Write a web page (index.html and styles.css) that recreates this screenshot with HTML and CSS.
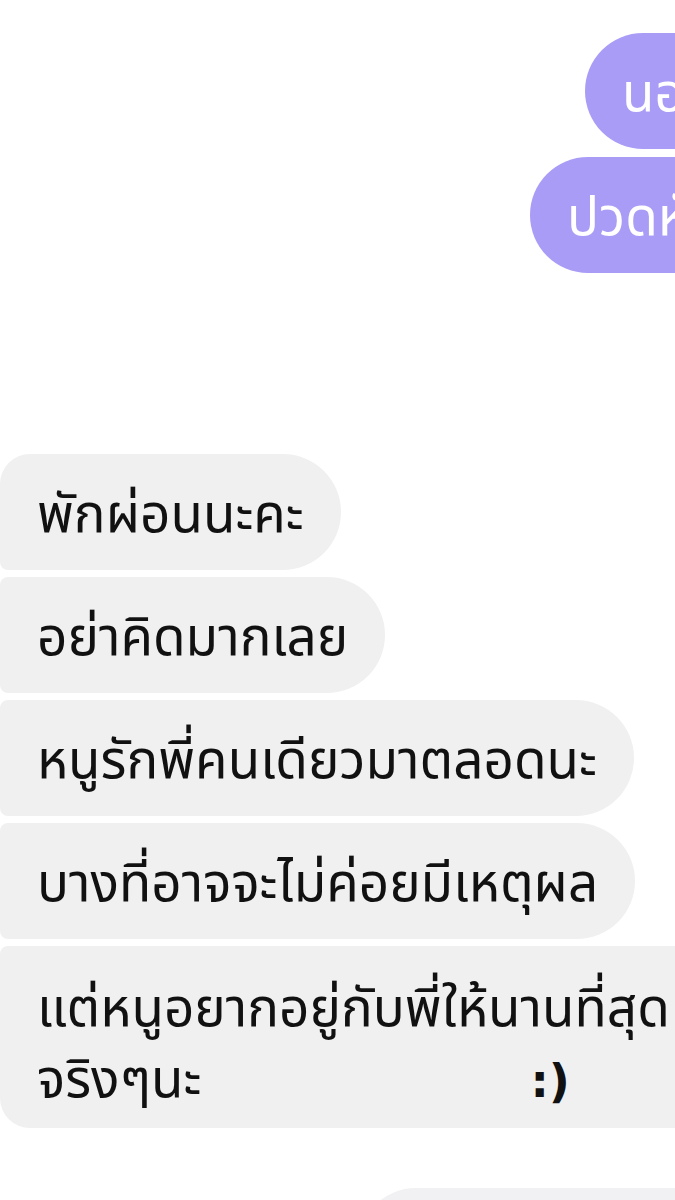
FILE: index.html
```html
<!DOCTYPE html>
<html>
<head>
	<meta charset="utf-8">
	<title>แชท</title>
	<link rel="stylesheet" href="styles.css">
</head>
<body>
	<div class="chat">
		<!-- ข้อความที่ส่ง -->
		<div class="group out">
			<div class="row row-a"><div class="bubble purple first">นอนไม่หลับ</div></div>
			<div class="row row-b"><div class="bubble purple last">ปวดหัวมาก</div></div>
		</div>

		<!-- ข้อความที่ได้รับ -->
		<div class="group in">
			<div class="bubble grey first">พักผ่อนนะคะ</div>
			<div class="bubble grey">อย่าคิดมากเลย</div>
			<div class="bubble grey">หนูรักพี่คนเดียวมาตลอดนะ</div>
			<div class="bubble grey">บางที่อาจจะไม่ค่อยมีเหตุผล</div>
			<div class="bubble grey last wide">แต่หนูอยากอยู่กับพี่ให้นานที่สุด<br>จริงๆนะ<span class="smile">:)</span></div>
		</div>

		<div class="group next">
			<div class="bubble grey first">&nbsp;</div>
		</div>
	</div>
</body>
</html>
```

FILE: styles.css
```css
*{
	margin: 0;
	padding: 0;
	box-sizing: border-box;
}
html, body{
	background: #ffffff;
	overflow: hidden;
}
body{
	width: 675px;
	height: 1200px;
	font-family: "Noto Sans Thai", "Noto Sans", "DejaVu Sans", sans-serif;
	font-size: 53px;
	color: #111111;
}
.chat{
	display: flex;
	flex-direction: column;
	padding-top: 33px;
}
.group{
	display: flex;
	flex-direction: column;
	gap: 8px;
}
.bubble{
	height: 116px;
	line-height: 68px;
	padding: 28px 37px 20px;
	white-space: nowrap;
	border-radius: 8px 58px 58px 8px;
}

/* ส่งออก */
.out .row{
	display: flex;
}
.row-a{
	padding-left: 585px;
}
.row-b{
	padding-left: 530px;
}
.purple{
	background: #a99cf6;
	color: #ffffff;
	border-radius: 58px 8px 8px 58px;
}
.purple.first{
	border-top-right-radius: 58px;
}
.purple.last{
	border-bottom-right-radius: 58px;
}

/* ขาเข้า */
.in{
	margin-top: 181px;
	align-items: flex-start;
	gap: 7px;
}
.grey{
	background: #f0f0f0;
}
.grey.first{
	border-top-left-radius: 30px;
}
.grey.last{
	border-bottom-left-radius: 30px;
}
.wide{
	width: 760px;
	height: 182px;
	line-height: 71px;
	padding-top: 29px;
}
.smile{
	display: inline-block;
	margin-left: 329px;
	font-family: "DejaVu Sans", sans-serif;
	font-size: 46px;
	font-weight: bold;
}

.next{
	margin-top: 60px;
	padding-left: 358px;
}
.next .bubble{
	width: 400px;
	background: #f1f1f3;
	border-top-left-radius: 58px;
}
```
